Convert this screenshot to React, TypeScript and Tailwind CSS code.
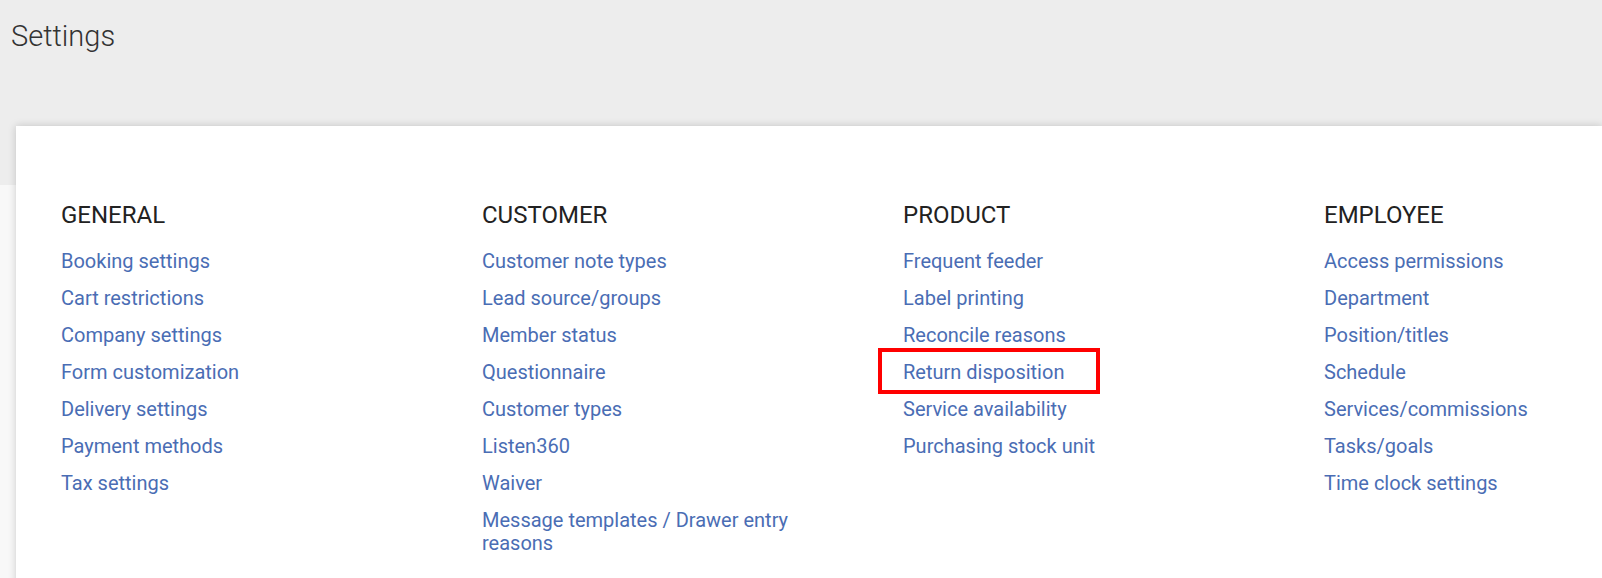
import React from 'react';

interface Section {
    title: string;
    links: string[];
}

const sections: Section[] = [
    {
        title: 'GENERAL',
        links: ['Booking settings', 'Cart restrictions', 'Company settings', 'Form customization', 'Delivery settings', 'Payment methods', 'Tax settings'],
    },
    {
        title: 'CUSTOMER',
        links: ['Customer note types', 'Lead source/groups', 'Member status', 'Questionnaire', 'Customer types', 'Listen360', 'Waiver', 'Message templates / Drawer entry reasons'],
    },
    {
        title: 'PRODUCT',
        links: ['Frequent feeder', 'Label printing', 'Reconcile reasons', 'Return disposition', 'Service availability', 'Purchasing stock unit'],
    },
    {
        title: 'EMPLOYEE',
        links: ['Access permissions', 'Department', 'Position/titles', 'Schedule', 'Services/commissions', 'Tasks/goals', 'Time clock settings'],
    },
];

const highlighted = 'Return disposition';

const SectionColumn: React.FC<{ section: Section }> = ({ section }) => (
    <div className="w-[421px] shrink-0 pr-[80px]">
        <h2 className="text-[24px] leading-[28px] font-normal text-[#222222]">{section.title}</h2>
        <ul className="mt-[21px] flex flex-col gap-[14.5px]">
            {section.links.map((link) => (
                <li key={link} className="relative">
                    <a href="#" className="text-[20px] leading-[22.5px] text-[#4a6db4] block">
                        {link}
                    </a>
                    {link === highlighted && (
                        <span className="pointer-events-none absolute left-[-25px] top-[-13px] w-[222px] h-[46px] border-[4px] border-[#ff0000]" />
                    )}
                </li>
            ))}
        </ul>
    </div>
);

const App: React.FC = () => {
    return (
        <div className="min-h-[578px] w-full bg-[#f8f8f8] font-['Roboto',sans-serif] overflow-hidden">
            <div className="h-[185px] bg-[#ededed] px-[11px] pt-[17px]">
                <h1 className="text-[29px] leading-[38px] font-light text-[#333333]">Settings</h1>
            </div>
            <div className="mt-[-59px] ml-[16px] bg-white min-h-[470px] shadow-[0_0_8px_rgba(0,0,0,0.18)] pl-[45px] pt-[75px] flex overflow-hidden">
                {sections.map((section) => (
                    <SectionColumn key={section.title} section={section} />
                ))}
            </div>
        </div>
    );
};

export default App;
